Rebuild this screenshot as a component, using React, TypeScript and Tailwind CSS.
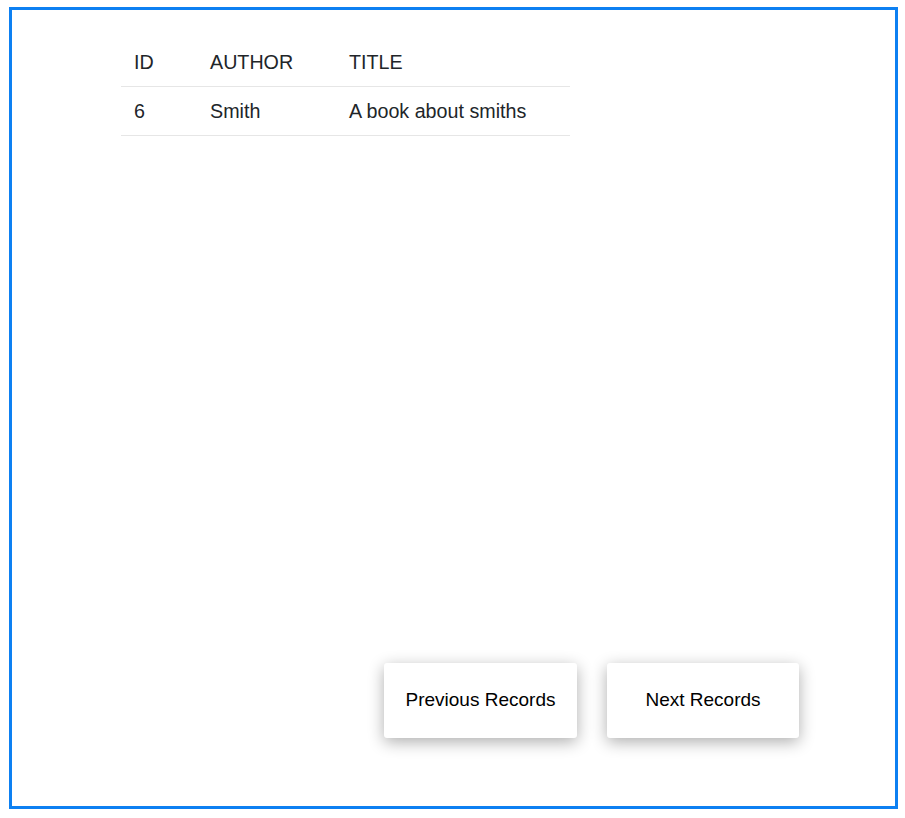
import React from "react";

type Book = { id: number; author: string; title: string };

const books: Book[] = [{ id: 6, author: "Smith", title: "A book about smiths" }];

const App = () => {
  return (
    <div
      className="w-[905px] h-[818px] bg-white pl-[9px] pt-[7px]"
      style={{ fontFamily: '"Liberation Sans", Arial, sans-serif' }}
    >
      <div className="w-[889px] h-[802px] border-[3px] border-[#0d80f2] flex flex-col">
        {/* Records table */}
        <div className="pl-[109px] pt-[27px]">
          <table className="w-[449px] text-[19.7px] text-[#212529] border-collapse">
            <thead>
              <tr className="h-[49px] border-b border-[#e6e6e6]">
                <th className="w-[76px] pl-[13px] pt-[3px] text-left font-normal">ID</th>
                <th className="w-[139px] pl-[13px] pt-[3px] text-left font-normal">AUTHOR</th>
                <th className="pl-[13px] pt-[3px] text-left font-normal">TITLE</th>
              </tr>
            </thead>
            <tbody>
              {books.map((book) => (
                <tr key={book.id} className="h-[49px] border-b border-[#e6e6e6]">
                  <td className="pl-[13px] pt-[2px]">{book.id}</td>
                  <td className="pl-[13px] pt-[2px]">{book.author}</td>
                  <td className="pl-[13px] pt-[2px]">{book.title}</td>
                </tr>
              ))}
            </tbody>
          </table>
        </div>

        <div className="flex-1" />

        {/* Paging buttons */}
        <div className="flex justify-end gap-[30px] pr-[96px] pb-[68px]">
          <button className="w-[193px] h-[75px] bg-white rounded-[3px] text-[19px] text-black shadow-[0_4px_16px_rgba(0,0,0,0.32)]">
            Previous Records
          </button>
          <button className="w-[192px] h-[75px] bg-white rounded-[3px] text-[19px] text-black shadow-[0_4px_16px_rgba(0,0,0,0.32)]">
            Next Records
          </button>
        </div>
      </div>
    </div>
  );
};

export default App;
